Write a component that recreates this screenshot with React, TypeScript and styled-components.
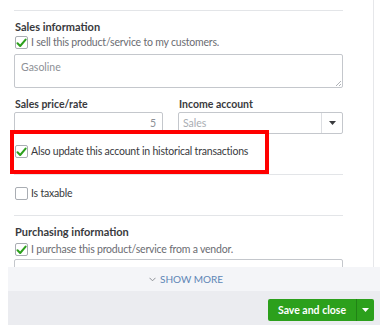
import styled, { createGlobalStyle } from 'styled-components';

const GlobalStyle = createGlobalStyle`
  html, body {
    margin: 0;
    padding: 0;
    background: #fff;
  }
  body {
    font-family: Lato, "Open Sans", Arial, sans-serif;
    color: #393a3d;
  }
`;

const Page = styled.div`
  width: 380px;
  height: 325px;
  overflow: hidden;
  display: flex;
  flex-direction: column;
  background: #fff;
`;

const Panel = styled.div`
  height: 267px;
  margin-left: 8px;
  width: 366px;
  box-sizing: border-box;
  padding: 10px 30px 0 6px;
  border-right: 1px solid #e6e7ea;
  overflow: hidden;
  display: flex;
  flex-direction: column;
`;

const Divider = styled.div<{ $top?: number }>`
  height: 1px;
  background: #e3e5e8;
  margin-top: ${({ $top }) => $top ?? 0}px;
  flex-shrink: 0;
`;

const SectionTitle = styled.div<{ $top: number }>`
  margin-top: ${({ $top }) => $top}px;
  font-size: 11px;
  font-weight: 700;
  line-height: 14px;
  color: #393a3d;
  padding-left: 1px;
`;

const CheckRow = styled.label<{ $top: number; $dark?: boolean }>`
  position: relative;
  display: flex;
  align-items: center;
  gap: 3px;
  margin-top: ${({ $top }) => $top}px;
  padding-left: 1px;
  height: 13px;
  font-size: 10.5px;
  letter-spacing: -0.2px;
  line-height: 13px;
  color: ${({ $dark }) => ($dark ? '#393a3d' : '#6b6c72')};
  flex-shrink: 0;
`;

const Box = styled.span`
  width: 13px;
  height: 13px;
  box-sizing: border-box;
  border: 1px solid #a9adb3;
  border-radius: 2px;
  background: #fff;
  display: flex;
  align-items: center;
  justify-content: center;
  flex-shrink: 0;
`;

const Highlight = styled.div`
  position: absolute;
  left: -4px;
  top: -15px;
  width: 259px;
  height: 44px;
  box-sizing: border-box;
  border: 4px solid #ff0000;
  pointer-events: none;
`;

const TextArea = styled.div`
  position: relative;
  margin-top: 5px;
  height: 34px;
  box-sizing: border-box;
  border: 1px solid #c4c7cc;
  border-radius: 2px;
  padding: 6px 6px;
  font-size: 10.5px;
  color: #8d9096;
  flex-shrink: 0;
`;

const Grip = styled.svg`
  position: absolute;
  right: 1px;
  bottom: 1px;
`;

const FieldGrid = styled.div`
  display: grid;
  grid-template-columns: 149px 165px;
  column-gap: 15px;
  margin-top: 9px;
  flex-shrink: 0;
`;

const FieldLabel = styled.div`
  font-size: 10.5px;
  font-weight: 700;
  line-height: 14px;
  color: #393a3d;
  padding-left: 1px;
  margin-bottom: 1px;
`;

const Input = styled.div<{ $align?: string }>`
  height: 22px;
  box-sizing: border-box;
  border: 1px solid #c4c7cc;
  border-radius: 2px;
  display: flex;
  align-items: center;
  justify-content: ${({ $align }) => ($align === 'right' ? 'flex-end' : 'flex-start')};
  padding: 0 6px;
  font-size: 10.5px;
  color: #8d9096;
`;

const Select = styled.div`
  height: 22px;
  box-sizing: border-box;
  border: 1px solid #c4c7cc;
  border-radius: 2px;
  display: flex;
  font-size: 10.5px;
  color: #a9adb3;
`;

const SelectValue = styled.div`
  flex: 1;
  display: flex;
  align-items: center;
  padding-left: 4px;
`;

const SelectArrow = styled.div`
  width: 20px;
  border-left: 1px solid #dcdee2;
  display: flex;
  align-items: center;
  justify-content: center;
`;

const PartialInput = styled.div`
  margin-top: 3px;
  height: 22px;
  box-sizing: border-box;
  border: 1px solid #c4c7cc;
  border-radius: 2px;
  flex-shrink: 0;
`;

const Footer = styled.div`
  margin-left: 8px;
  flex: 1;
  display: flex;
  flex-direction: column;
`;

const ShowMore = styled.div`
  height: 24px;
  background: #f4f5f8;
  display: flex;
  align-items: center;
  justify-content: center;
  gap: 4px;
  font-size: 10px;
  color: #5d86b6;
  padding-right: 16px;
`;

const ActionBar = styled.div`
  flex: 1;
  background: #ebecf0;
  display: flex;
  justify-content: flex-end;
  padding: 8px 6px 0 0;
`;

const SplitButton = styled.div`
  display: flex;
  height: 22px;
  border-radius: 2px;
  overflow: hidden;
  background: #2ca01c;
  color: #fff;
`;

const MainAction = styled.div`
  width: 88px;
  display: flex;
  align-items: center;
  justify-content: center;
  font-size: 10.5px;
  font-weight: 700;
`;

const MenuAction = styled.div`
  width: 17px;
  border-left: 1px solid #228216;
  display: flex;
  align-items: center;
  justify-content: center;
`;

const Check = () => (
  <svg width="11" height="10" viewBox="0 0 11 10">
    <path d="M1.5 5.2 L4.2 8 L9.6 1.6" fill="none" stroke="#2ca01c" strokeWidth="2" strokeLinecap="round" strokeLinejoin="round" />
  </svg>
);

const Caret = ({ color }: { color: string }) => (
  <svg width="7" height="4" viewBox="0 0 7 4">
    <path d="M0 0 H7 L3.5 4 Z" fill={color} />
  </svg>
);

const Checkbox = ({ checked }: { checked?: boolean }) => <Box>{checked && <Check />}</Box>;

const App = () => (
  <Page>
    <GlobalStyle />
    <Panel>
      <Divider />
      <SectionTitle $top={9}>Sales information</SectionTitle>
      <CheckRow $top={2}>
        <Checkbox checked />
        I sell this product/service to my customers.
      </CheckRow>
      <TextArea>
        Gasoline
        <Grip width="5" height="5" viewBox="0 0 5 5">
          <path d="M5 0 L0 5 M5 3 L3 5" stroke="#b0b3b8" strokeWidth="1" />
        </Grip>
      </TextArea>
      <FieldGrid>
        <div>
          <FieldLabel>Sales price/rate</FieldLabel>
          <Input $align="right">5</Input>
        </div>
        <div>
          <FieldLabel>Income account</FieldLabel>
          <Select>
            <SelectValue>Sales</SelectValue>
            <SelectArrow>
              <Caret color="#393a3d" />
            </SelectArrow>
          </Select>
        </div>
      </FieldGrid>
      <CheckRow $top={11} $dark>
        <Checkbox checked />
        Also update this account in historical transactions
        <Highlight />
      </CheckRow>
      <Divider $top={16} />
      <CheckRow $top={12} $dark>
        <Checkbox />
        Is taxable
      </CheckRow>
      <Divider $top={15} />
      <SectionTitle $top={9}>Purchasing information</SectionTitle>
      <CheckRow $top={4}>
        <Checkbox checked />
        I purchase this product/service from a vendor.
      </CheckRow>
      <PartialInput />
    </Panel>
    <Footer>
      <ShowMore>
        <svg width="7" height="5" viewBox="0 0 7 5">
          <path d="M0.5 0.8 L3.5 3.8 L6.5 0.8" fill="none" stroke="#8d9096" strokeWidth="1" />
        </svg>
        SHOW MORE
      </ShowMore>
      <ActionBar>
        <SplitButton>
          <MainAction>Save and close</MainAction>
          <MenuAction>
            <Caret color="#fff" />
          </MenuAction>
        </SplitButton>
      </ActionBar>
    </Footer>
  </Page>
);

export default App;
